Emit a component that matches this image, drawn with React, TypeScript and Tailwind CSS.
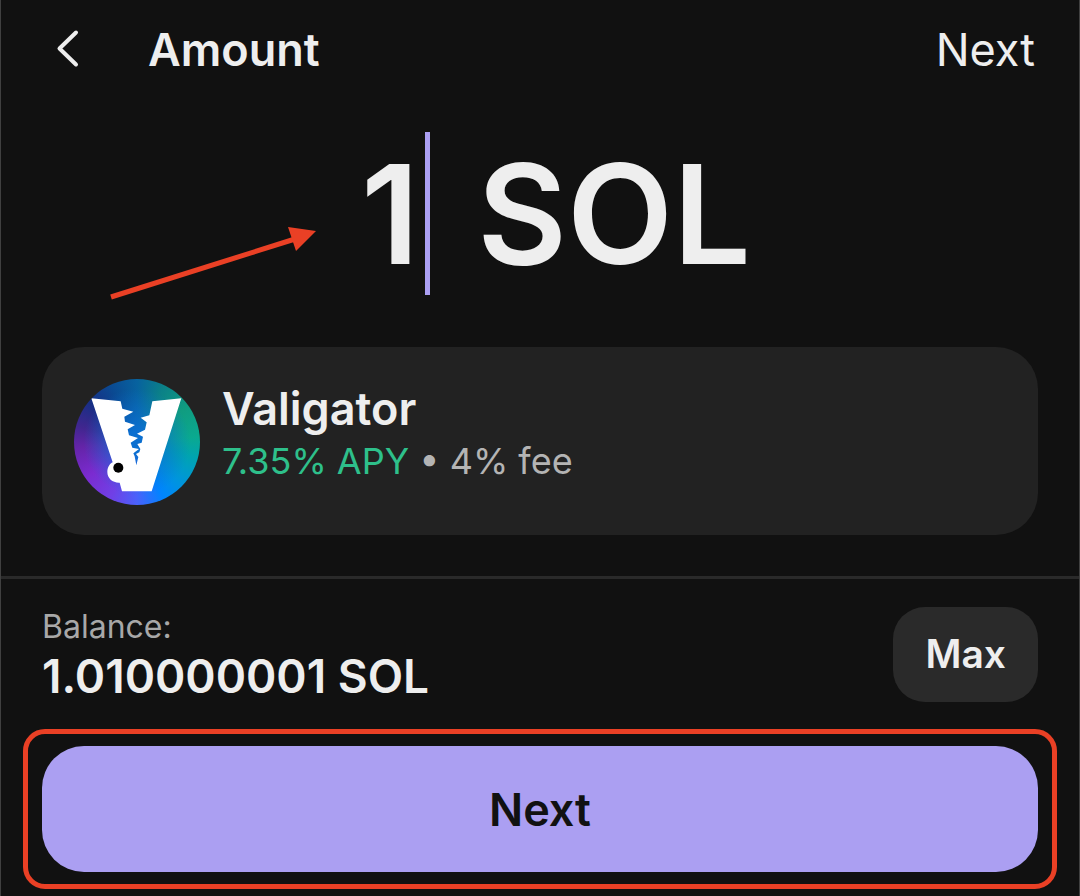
const ValigatorLogo = () => {
  return (
    <div className="relative size-[126px] shrink-0 overflow-hidden rounded-full bg-[conic-gradient(from_0deg,#07629f,#0b8088_25deg,#109c80_55deg,#0aa98f_85deg,#00a4b0_105deg,#0094e0_135deg,#0084ff_155deg,#4a62fb_180deg,#7040e6_205deg,#7b2bd0_235deg,#6424a8_265deg,#40268f_285deg,#172f85_310deg,#0a4a92_335deg,#07629f)]">
      <div className="absolute inset-0 bg-[radial-gradient(circle,#0b6fd0_0%,#0b6fd0_12%,transparent_60%)]" />
      <svg
        viewBox="42 40 378 378"
        className="relative block size-full"
        role="img"
        aria-label="Valigator"
      >
        <path
          fill="#fff"
          d="M94 98 L182 107 L187 129 L220 138 L193 153 L195 168 L225 178 L203 191 L207 209 L234 217 L212 231 L217 246 L237 250 L220 263 L224 272 L229 299 L235 274 L228 265 L238 260 L241 250 L232 235 L245 231 L249 213 L231 204 L255 192 L260 170 L242 156 L268 149 L277 107 L364 98 L275 377 L186 377 L179 351 C158 352 142 338 142 319 C142 304 150 294 158 290 Z"
        />
        <circle cx="175" cy="306" r="15" fill="#000" />
      </svg>
    </div>
  );
};

const PointerArrow = () => {
  return (
    <svg
      viewBox="0 0 208 74"
      className="pointer-events-none absolute right-full top-[94px] mr-11 h-[74px] w-[208px]"
      aria-hidden="true"
    >
      <line x1="2" y1="71" x2="186" y2="13" stroke="#ea4025" strokeWidth="5" />
      <polygon points="179,1 207,5 187,25" fill="#ea4025" />
    </svg>
  );
};

export const AmountScreen = () => {
  return (
    <div className="flex min-h-screen flex-col border-x border-[#404040] bg-[#111111] font-[Inter,sans-serif] text-[#eeeeee]">
      <header className="flex h-[100px] items-center pl-[55px] pr-[44px]">
        <button type="button" aria-label="Back" className="mr-[68px]">
          <svg
            viewBox="0 0 24 38"
            className="block h-[38px] w-6 overflow-visible"
            fill="none"
          >
            <path
              d="M20 1.5 L3.5 17.5 L20 33.5"
              stroke="currentColor"
              strokeWidth="4"
              strokeLinecap="round"
              strokeLinejoin="round"
            />
          </svg>
        </button>
        <h1 className="text-[45px] font-semibold leading-[54px]">Amount</h1>
        <button type="button" className="ml-auto text-[45px] leading-[54px]">
          Next
        </button>
      </header>

      <div className="flex justify-center pl-8 pt-8">
        <div className="relative flex items-center text-[138px] font-semibold leading-[163px]">
          <PointerArrow />
          <input
            aria-label="Amount in SOL"
            inputMode="decimal"
            defaultValue="1"
            className="field-sizing-content h-[163px] bg-transparent outline-none"
          />
          <span className="ml-1.5 mr-3 h-[163px] w-[5px] bg-[#ab9ff2]" />
          <span className="whitespace-pre"> SOL</span>
        </div>
      </div>

      <section className="mx-[41px] mt-[52px] flex h-[188px] items-start gap-[22px] rounded-[42px] bg-[#222222] px-8 pt-8">
        <ValigatorLogo />
        <div className="pt-[3px]">
          <h2 className="text-[45px] font-semibold leading-[54px]">
            Valigator
          </h2>
          <p className="text-[36px] leading-[50px] text-[#b4b4b4]">
            <span className="text-[#2ec08b]">7.35% APY</span> • 4% fee
          </p>
        </div>
      </section>

      <footer className="mt-[41px] border-t-[3px] border-[#2a2a2a] pt-7">
        <div className="flex items-start justify-between px-[41px]">
          <div>
            <p className="text-[32px] leading-[40px] text-[#a8a8a8]">
              Balance:
            </p>
            <p className="text-[46px] font-semibold leading-[58px]">
              1.010000001 SOL
            </p>
          </div>
          <button
            type="button"
            className="h-[95px] rounded-[32px] bg-[#2a2a2a] px-8 text-[39px] font-semibold"
          >
            Max
          </button>
        </div>

        <div className="mx-[22px] mt-6 rounded-[22px] border-[5px] border-[#ea4025] px-[14px] py-3">
          <button
            type="button"
            className="block h-[126px] w-full rounded-[42px] bg-[#ab9ff2] pt-0.5 text-[45px] font-semibold text-[#111111]"
          >
            Next
          </button>
        </div>
      </footer>
    </div>
  );
};

export default AmountScreen;
